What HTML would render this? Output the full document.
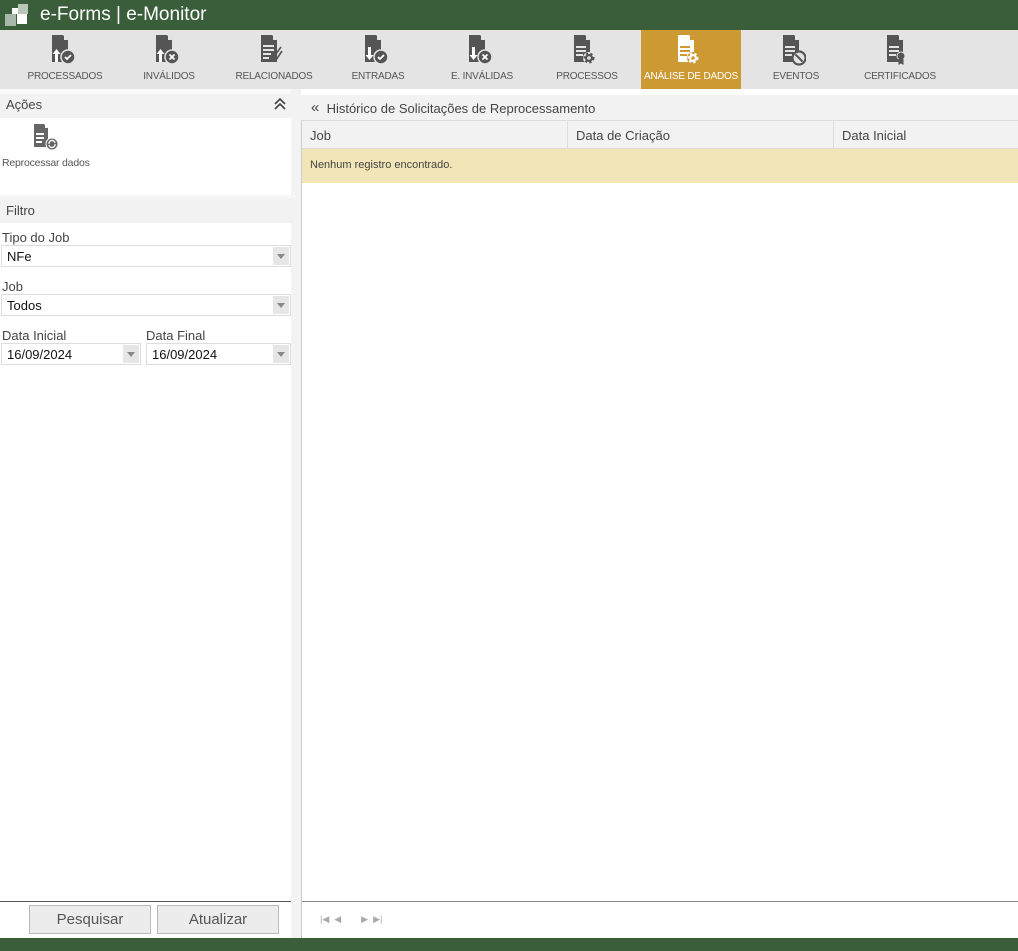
<!DOCTYPE html>
<html><head><meta charset="utf-8"><style>
*{box-sizing:border-box;margin:0;padding:0}
body{width:1018px;height:951px;overflow:hidden;background:#fff;font-family:"Liberation Sans",sans-serif;position:relative;color:#333}
.abs{position:absolute}
.tb{left:0;top:0;width:1018px;height:30px;background:#3a5e3a}
.title{left:40px;top:4px;color:#fff;font-size:19px}
.tool{top:30px;left:0;width:1018px;height:59px;background:#e4e4e4}
.it{position:absolute;top:30px;height:59px;width:104px;text-align:center}
.it span{position:absolute;left:0;right:0;top:41px;font-size:10px;color:#555;white-space:nowrap;letter-spacing:-0.2px}
.it svg{position:absolute;left:28px;top:4px}
.sel{background:#cc9933}
.sel span{color:#fff}
.hdr{background:#f2f2f2;font-size:13px;color:#444}
.lbl{font-size:13px;color:#444}
.inp{border:1px solid #ddd;background:#fff;height:22px;font-size:13px;color:#111;padding:3px 5px}
.dd{position:absolute;right:1px;top:1px;width:16px;height:18px;background:#e6e6e6}
.dd:after{content:"";position:absolute;left:4px;top:7px;border:4px solid transparent;border-top:5px solid #888}
.btn{border:1px solid #bbb;background:#ececec;font-size:15px;color:#555;text-align:center;line-height:27px;height:29px}
</style></head><body>
<div class="abs tb"></div>
<svg class="abs" style="left:0;top:0" width="32" height="30"><rect x="12" y="8" width="6" height="6" fill="#fff"/><rect x="18" y="4" width="10" height="10" fill="#b8c8b8"/><rect x="5" y="14" width="11" height="12" fill="#a8b8a8"/><rect x="17" y="14" width="10" height="10" fill="#fff"/></svg>
<div class="abs title">e-Forms | e-Monitor</div>
<div class="abs tool"></div>

<div class="it" style="left:13px"><svg width="34" height="34"><path d="M11 1h11l5 5v22H11z" fill="#555"/><path d="M23 1l4 5h-4z" fill="#e4e4e4"/><path d="M14 28v-8h-2.5l4-5 4 5H17v8z" fill="#fff"/><circle cx="27" cy="23" r="7" fill="#555" stroke="#e4e4e4" stroke-width="1.5"/><path d="M24 23l2 2 4-4" stroke="#fff" stroke-width="1.8" fill="none"/></svg><span>PROCESSADOS</span></div>
<div class="it" style="left:117px"><svg width="34" height="34"><path d="M11 1h11l5 5v22H11z" fill="#555"/><path d="M23 1l4 5h-4z" fill="#e4e4e4"/><path d="M14 28v-8h-2.5l4-5 4 5H17v8z" fill="#fff"/><circle cx="27" cy="23" r="7" fill="#555" stroke="#e4e4e4" stroke-width="1.5"/><path d="M24.5 20.5l5 5M29.5 20.5l-5 5" stroke="#fff" stroke-width="1.8"/></svg><span>INVÁLIDOS</span></div>
<div class="it" style="left:222px"><svg width="34" height="34"><path d="M11 1h11l5 5v22H11z" fill="#555"/><path d="M23 1l4 5h-4z" fill="#e4e4e4"/><path d="M13 12h11M13 16h11M13 20h8M13 24h6" stroke="#e4e4e4" stroke-width="2"/><path d="M31 13l-8 11a2 2 0 0 0 3 2l6-9" stroke="#555" stroke-width="1.6" fill="none"/></svg><span>RELACIONADOS</span></div>
<div class="it" style="left:326px"><svg width="34" height="34"><path d="M11 1h11l5 5v22H11z" fill="#555"/><path d="M23 1l4 5h-4z" fill="#e4e4e4"/><path d="M14 13v8h-2.5l4 5 4-5H17v-8z" fill="#fff"/><circle cx="27" cy="23" r="7" fill="#555" stroke="#e4e4e4" stroke-width="1.5"/><path d="M24 23l2 2 4-4" stroke="#fff" stroke-width="1.8" fill="none"/></svg><span>ENTRADAS</span></div>
<div class="it" style="left:430px"><svg width="34" height="34"><path d="M11 1h11l5 5v22H11z" fill="#555"/><path d="M23 1l4 5h-4z" fill="#e4e4e4"/><path d="M14 13v8h-2.5l4 5 4-5H17v-8z" fill="#fff"/><circle cx="27" cy="23" r="7" fill="#555" stroke="#e4e4e4" stroke-width="1.5"/><path d="M24.5 20.5l5 5M29.5 20.5l-5 5" stroke="#fff" stroke-width="1.8"/></svg><span>E. INVÁLIDAS</span></div>
<div class="it" style="left:535px"><svg width="34" height="34"><path d="M11 1h11l5 5v22H11z" fill="#555"/><path d="M23 1l4 5h-4z" fill="#e4e4e4"/><path d="M13 13h10M13 17h10M13 21h7" stroke="#e4e4e4" stroke-width="2"/><circle cx="26" cy="24" r="6" fill="#e4e4e4"/><circle cx="26" cy="24" r="4" fill="#555" stroke="#555" stroke-width="3" stroke-dasharray="2 2"/><circle cx="26" cy="24" r="1.8" fill="#e4e4e4"/></svg><span>PROCESSOS</span></div>
<div class="it sel" style="left:641px;width:100px"><svg width="34" height="34" style="left:26px"><path d="M11 1h11l5 5v22H11z" fill="#fff"/><path d="M23 1l4 5h-4z" fill="#cc9933"/><path d="M13 13h10M13 17h10M13 21h7" stroke="#cc9933" stroke-width="2"/><circle cx="26" cy="24" r="6" fill="#cc9933"/><circle cx="26" cy="24" r="4" fill="#fff" stroke="#fff" stroke-width="3" stroke-dasharray="2 2"/><circle cx="26" cy="24" r="1.8" fill="#cc9933"/></svg><span>ANÁLISE DE DADOS</span></div>
<div class="it" style="left:744px"><svg width="34" height="34"><path d="M11 1h11l5 5v22H11z" fill="#555"/><path d="M23 1l4 5h-4z" fill="#e4e4e4"/><path d="M13 13h10M13 17h10M13 21h7" stroke="#e4e4e4" stroke-width="2"/><circle cx="27" cy="24" r="6.5" fill="#e4e4e4" stroke="#555" stroke-width="2.2"/><path d="M23.5 20.5l7 7" stroke="#555" stroke-width="2"/></svg><span>EVENTOS</span></div>
<div class="it" style="left:848px"><svg width="34" height="34"><path d="M11 1h11l5 5v22H11z" fill="#555"/><path d="M23 1l4 5h-4z" fill="#e4e4e4"/><path d="M13 13h10M13 17h10M13 21h7" stroke="#e4e4e4" stroke-width="2"/><circle cx="25" cy="22" r="4" fill="#555" stroke="#e4e4e4"/><path d="M22.5 25v6l2.5-1.5 2.5 1.5v-6z" fill="#555"/></svg><span>CERTIFICADOS</span></div>

<!-- left panel -->
<div class="abs" style="left:291px;top:89px;width:10px;height:849px;background:#f3f3f3"></div>
<div class="abs" style="left:0;top:89px;width:291px;height:6px;background:#fafafa"></div>
<div class="abs hdr" style="left:0;top:94px;width:296px;height:24px;padding:3px 6px">Ações</div>
<svg class="abs" style="left:273px;top:97px" width="14" height="14"><path d="M2 7l5-5 5 5M2 12l5-5 5 5" stroke="#444" stroke-width="1.6" fill="none"/></svg>
<svg class="abs" style="left:33px;top:123px" width="28" height="28"><path d="M1 1h10l4 4v19H1z" fill="#666"/><path d="M12 1l3 4h-3z" fill="#fff"/><path d="M3 11h8M3 15h8M3 19h6" stroke="#fff" stroke-width="2"/><circle cx="19" cy="21" r="6" fill="#666" stroke="#fff"/><path d="M16 21a3 3 0 0 1 6-1M22 21a3 3 0 0 1-6 1" stroke="#fff" stroke-width="1.3" fill="none"/></svg>
<div class="abs" style="left:2px;top:157px;font-size:10.5px;color:#555;letter-spacing:-0.2px">Reprocessar dados</div>
<div class="abs" style="left:0;top:195px;width:296px;height:3px;background:#f6f6f6"></div>
<div class="abs hdr" style="left:0;top:198px;width:296px;height:25px;padding:5px 6px">Filtro</div>
<div class="abs lbl" style="left:2px;top:230px">Tipo do Job</div>
<div class="abs inp" style="left:1px;top:245px;width:290px">NFe<div class="dd"></div></div>
<div class="abs lbl" style="left:2px;top:279px">Job</div>
<div class="abs inp" style="left:1px;top:294px;width:290px">Todos<div class="dd"></div></div>
<div class="abs lbl" style="left:2px;top:328px">Data Inicial</div>
<div class="abs lbl" style="left:146px;top:328px">Data Final</div>
<div class="abs inp" style="left:1px;top:343px;width:140px">16/09/2024<div class="dd"></div></div>
<div class="abs inp" style="left:146px;top:343px;width:145px">16/09/2024<div class="dd"></div></div>
<div class="abs" style="left:0;top:901px;width:291px;height:1px;background:#555"></div>
<div class="abs btn" style="left:29px;top:905px;width:122px">Pesquisar</div>
<div class="abs btn" style="left:157px;top:905px;width:122px">Atualizar</div>

<!-- right panel -->
<div class="abs" style="left:301px;top:95px;width:717px;height:25px;background:#f2f2f2;font-size:13px;color:#444;padding:5px 0 0 10px"><span style="font-size:15px;position:relative;top:-1px">&#171;</span>&nbsp; Histórico de Solicitações de Reprocessamento</div>
<div class="abs" style="left:301px;top:120px;width:717px;height:818px;border-left:1px solid #ccc;border-top:1px solid #ddd"></div>
<div class="abs" style="left:302px;top:121px;width:716px;height:28px;background:#f2f2f2;border-bottom:1px solid #ddd;font-size:13px;color:#444">
<div class="abs" style="left:8px;top:7px">Job</div>
<div class="abs" style="left:265px;top:0;width:1px;height:28px;background:#ddd"></div>
<div class="abs" style="left:274px;top:7px">Data de Criação</div>
<div class="abs" style="left:531px;top:0;width:1px;height:28px;background:#ddd"></div>
<div class="abs" style="left:540px;top:7px">Data Inicial</div>
</div>
<div class="abs" style="left:302px;top:149px;width:716px;height:34px;background:#f2e6b8;font-size:11px;color:#444;padding:10px 8px">Nenhum registro encontrado.</div>
<div class="abs" style="left:302px;top:901px;width:716px;height:1px;background:#888"></div>
<div class="abs" style="left:320px;top:914px;font-size:9px;color:#aaa;letter-spacing:0">|&#9664;&nbsp;&nbsp;&#9664;&nbsp;&nbsp;&nbsp;&nbsp;&nbsp;&nbsp;&nbsp;&nbsp;&#9654;&nbsp;&nbsp;&#9654;|</div>
<div class="abs" style="left:0;top:938px;width:1018px;height:13px;background:#3a5e3a"></div>
</body></html>
